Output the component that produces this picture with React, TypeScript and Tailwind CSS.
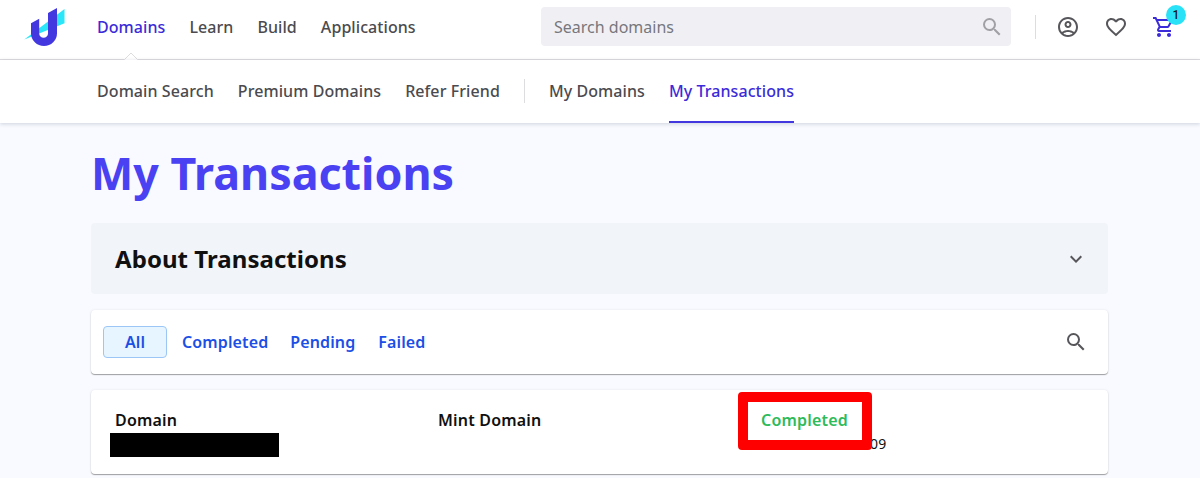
import {
  MdExpandMore,
  MdFavoriteBorder,
  MdOutlineAccountCircle,
  MdOutlineShoppingCart,
  MdSearch,
} from "react-icons/md";

function Logo() {
  return (
    <svg width="42" height="40" viewBox="24 7 42 40" className="shrink-0">
      <path d="M64.5 9v14.3L24.3 39.5z" fill="#2be5f8" />
      <path
        d="M57 8v25.2a13 12.8 0 0 1-26 0V23.3l8.2-4.6v14.7a4.4 4.4 0 0 0 8.8 0V13z"
        fill="#4338e0"
      />
    </svg>
  );
}

function Header() {
  return (
    <header className="relative flex h-[60px] items-center border-b border-[#dddddf] bg-white pb-1.5 pl-6">
      <Logo />
      <nav className="ml-[31px] flex w-[444px] gap-6 font-medium tracking-[0.07px] text-[#4b4b4f]">
        <span className="text-[#3b2bd8]">Domains</span>
        <span>Learn</span>
        <span>Build</span>
        <span>Applications</span>
      </nav>
      {/* Caret under the active section */}
      <svg width="16" height="9" viewBox="0 0 16 9" className="absolute left-[123px] top-[52px]">
        <path d="M1 9V7.5L8 1l7 6.5V9" fill="#fff" />
        <path d="M0 7.5h1.5L8 1l6.5 6.5H16" fill="none" stroke="#dddddf" />
      </svg>
      <div className="flex h-[39px] w-[470px] items-center justify-between rounded bg-[#f0f0f4] pl-[13px] pr-[7px] text-[#77777c]">
        <span>Search domains</span>
        <MdSearch size={24} className="text-[#a0a0a5]" />
      </div>
      <div className="ml-6 h-6 w-px bg-[#dddddf]" />
      <div className="ml-5 flex gap-6 text-[#57575b]">
        <MdOutlineAccountCircle size={24} />
        <MdFavoriteBorder size={24} />
        <div className="relative">
          <MdOutlineShoppingCart size={24} className="text-[#3b2bd8]" />
          <span className="absolute left-[14px] top-[-10px] flex size-5 items-center justify-center rounded-full bg-[#29e2f8] font-[Roboto] text-xs font-medium text-[#1b1b1b]">
            1
          </span>
        </div>
      </div>
    </header>
  );
}

function SubNav() {
  return (
    <nav className="relative flex h-[63px] items-center gap-6 bg-white pl-[97px] font-medium tracking-[0.08px] text-[#4b4b4f] shadow-[0_1px_4px_rgba(30,30,70,0.18)] *:-mt-px">
      <span>Domain Search</span>
      <span>Premium Domains</span>
      <span>Refer Friend</span>
      <div className="h-6 w-px bg-[#dddddf]" />
      <span>My Domains</span>
      <span className="flex h-16 items-center border-b-2 border-[#4338e0] pt-0.5 text-[#3b2bd8]">
        My Transactions
      </span>
    </nav>
  );
}

function Filters() {
  return (
    <div className="mt-4 flex h-16 items-center rounded bg-white pl-3 pr-5 font-semibold tracking-[0.12px] text-[#1c4fe6] shadow-[0_1px_1px_rgba(0,0,0,0.35),0_0_3px_rgba(0,0,0,0.08)]">
      <span className="flex h-8 w-16 items-center justify-center rounded border border-[#9cc6f6] bg-[#e6f5ff]">
        All
      </span>
      <span className="ml-[15px]">Completed</span>
      <span className="ml-[22px]">Pending</span>
      <span className="ml-[23px]">Failed</span>
      <MdSearch size={24} className="ml-auto text-[#57575b]" />
    </div>
  );
}

function TransactionRow() {
  return (
    <div className="mt-4 flex h-[84px] rounded bg-white pl-6 pt-[18px] font-semibold tracking-[0.2px] text-[#101010] shadow-[0_1px_1px_rgba(0,0,0,0.35),0_0_3px_rgba(0,0,0,0.08)]">
      <div className="w-[323px]">
        Domain
        <div className="-ml-[5px] mt-[1px] h-6 w-[169px] bg-black" />
      </div>
      <div className="w-[323px]">Mint Domain</div>
      <div className="relative">
        <span className="text-[#2ebb5b]">Completed</span>
        <span className="absolute left-[109px] top-[26px] text-sm font-normal">09</span>
        <div className="absolute left-[-23px] top-[-16px] h-[58px] w-[134px] rounded border-[10px] border-[#ff0000]" />
      </div>
    </div>
  );
}

export default function App() {
  return (
    <div className="h-[478px] overflow-hidden bg-[#f8faff] font-['Noto_Sans',sans-serif] text-base">
      <Header />
      <SubNav />
      <main className="ml-[91px] w-[1017px] pt-5">
        <h1 className="text-[44.8px] font-bold leading-[60px] text-[#4a42f2]">My Transactions</h1>
        <section className="mt-5 flex h-[71px] items-center justify-between rounded bg-[#f1f4f9] pl-6 pr-5">
          <h2 className="text-2xl font-bold tracking-[0.05px] text-[#101010]">About Transactions</h2>
          <MdExpandMore size={24} className="text-[#57575b]" />
        </section>
        <Filters />
        <TransactionRow />
      </main>
    </div>
  );
}
